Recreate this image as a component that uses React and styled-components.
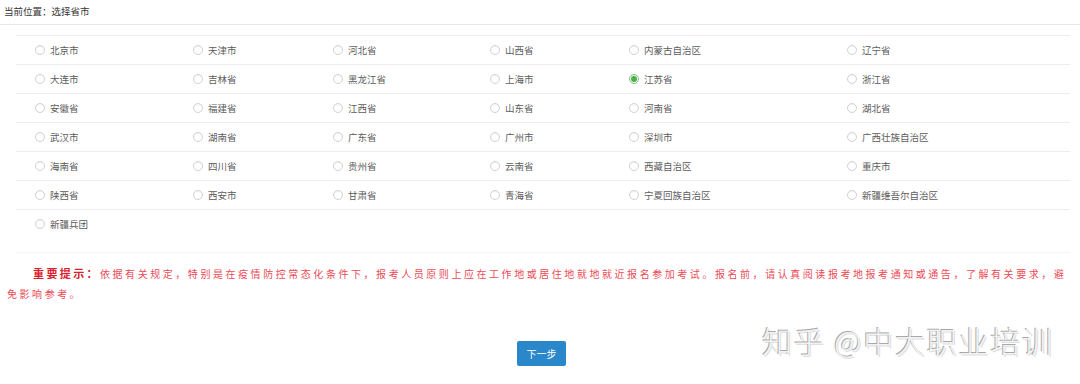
import React, { useState } from "react";
import styled, { createGlobalStyle } from "styled-components";

const provinces = [
	["北京市", "天津市", "河北省", "山西省", "内蒙古自治区", "辽宁省"],
	["大连市", "吉林省", "黑龙江省", "上海市", "江苏省", "浙江省"],
	["安徽省", "福建省", "江西省", "山东省", "河南省", "湖北省"],
	["武汉市", "湖南省", "广东省", "广州市", "深圳市", "广西壮族自治区"],
	["海南省", "四川省", "贵州省", "云南省", "西藏自治区", "重庆市"],
	["陕西省", "西安市", "甘肃省", "青海省", "宁夏回族自治区", "新疆维吾尔自治区"],
	["新疆兵团"],
];

const GlobalStyle = createGlobalStyle`
	body {
		margin: 0;
		background: #fff;
		font-family: "Noto Sans CJK SC", "Noto Sans", sans-serif;
	}
`;

const App = () => {
	const [picked, setPicked] = useState("江苏省");

	return (
		<Page>
			<GlobalStyle />
			<Breadcrumb>当前位置：选择省市</Breadcrumb>

			<FormArea>
				<ProvinceTable>
					{provinces.map((row, i) => (
						<Row key={i}>
							{row.map((name) => (
								<Option key={name} onClick={() => setPicked(name)}>
									<Radio checked={picked === name} />
									<span>{name}</span>
								</Option>
							))}
						</Row>
					))}
				</ProvinceTable>
			</FormArea>

			<Notice>
				<Label>重要提示：</Label>
				<span>
					依据有关规定，特别是在疫情防控常态化条件下，报考人员原则上应在工作地或居住地就地就近报名参加考试。报名前，请认真阅读报考地报考通知或通告，了解有关要求，避免影响参考。
				</span>
			</Notice>

			<Actions>
				<NextButton>下一步</NextButton>
			</Actions>

			<Watermark>知乎 @中大职业培训</Watermark>
		</Page>
	);
};

export default App;

const Page = styled.div`
	position: relative;
	width: 1080px;
	height: 384px;
	overflow: hidden;
`;

const Breadcrumb = styled.div`
	height: 25px;
	box-sizing: border-box;
	padding: 4px 0 0 4px;
	font-size: 9.5px;
	line-height: 14px;
	color: #333;
	border-bottom: 1px solid #e8e8e8;
`;

const FormArea = styled.div`
	margin: 10px 10px 0 16px;
	padding-bottom: 14px;
	border-bottom: 1px solid #f4f4f4;
`;

const ProvinceTable = styled.div`
	display: flex;
	flex-direction: column;
`;

const Row = styled.div`
	display: grid;
	grid-template-columns: 158px 140px 157px 139px 218px 1fr;
	height: 29px;
	box-sizing: border-box;
	border-top: 1px solid #eeeeee;
`;

const Option = styled.label`
	display: flex;
	align-items: center;
	gap: 5px;
	padding-left: 19px;
	font-size: 9.5px;
	color: #5c5c5c;
	cursor: pointer;
`;

const Radio = styled.span`
	width: 10px;
	height: 10px;
	box-sizing: border-box;
	border-radius: 50%;
	border: 1px solid ${(p) => (p.checked ? "#7cc47c" : "#d2d2d2")};
	box-shadow: inset 0 1px 1px rgba(0, 0, 0, 0.05);
	display: grid;
	place-content: center;
	&::after {
		content: "";
		display: ${(p) => (p.checked ? "block" : "none")};
		width: 6px;
		height: 6px;
		border-radius: 50%;
		background: #4cae4c;
	}
`;

const Notice = styled.p`
	width: 1065px;
	margin: 10px 0 0 7px;
	text-indent: 26px;
	font-size: 10px;
	letter-spacing: 2.55px;
	line-height: 20px;
	color: #ec4a55;
`;

const Label = styled.strong`
	font-size: 11px;
	letter-spacing: 2.4px;
	color: #d9202c;
`;

const Actions = styled.div`
	display: flex;
	justify-content: center;
	margin-top: 37px;
	padding-left: 3px;
`;

const NextButton = styled.button`
	width: 49px;
	height: 25px;
	border: none;
	border-radius: 2px;
	background: #2a87c9;
	color: #fff;
	font-family: inherit;
	font-size: 10px;
	cursor: pointer;
`;

const Watermark = styled.div`
	position: absolute;
	left: 762px;
	top: 318px;
	font-size: 30px;
	font-weight: 300;
	letter-spacing: 1.8px;
	color: #f2f2f2;
	text-shadow: -1px -1px 0 #a8a8a8, 1px 1px 0 #e0e0e0;
	pointer-events: none;
	white-space: nowrap;
`;
